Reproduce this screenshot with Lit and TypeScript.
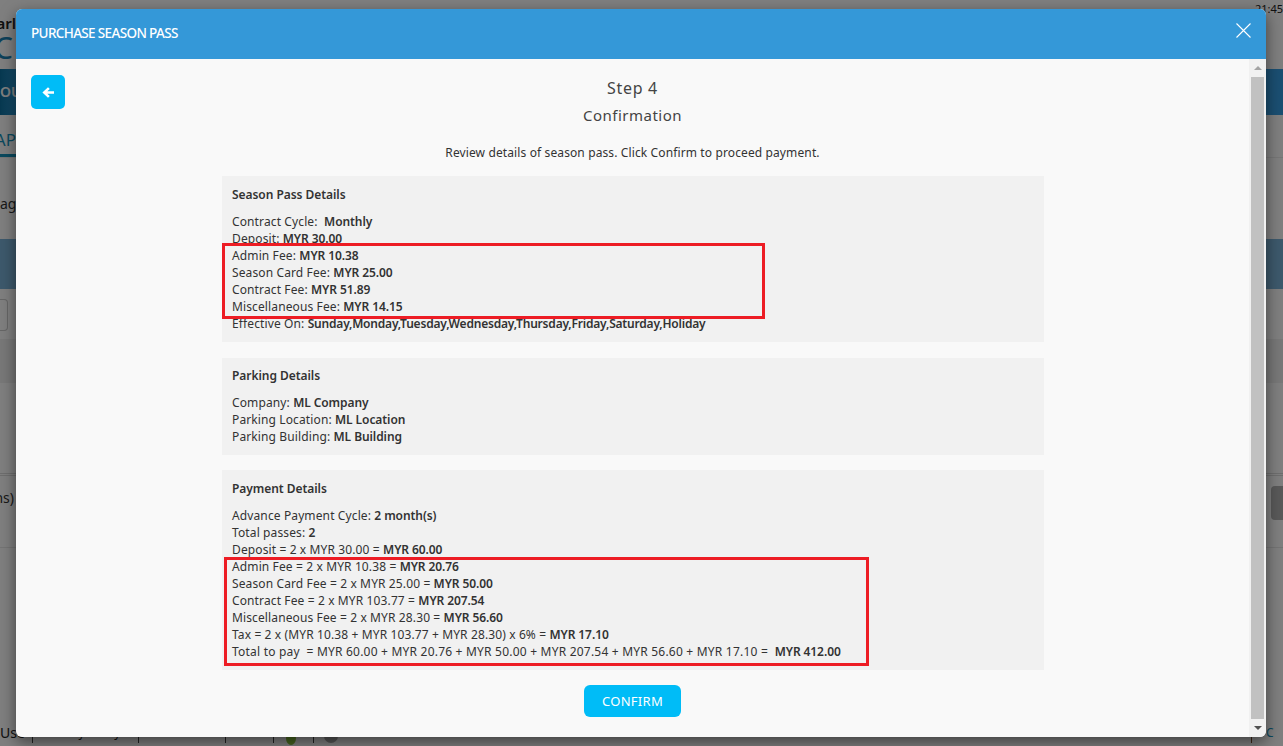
import { LitElement, html, css } from "lit";
import { customElement } from "lit/decorators.js";

@customElement("app-root")
export class AppRoot extends LitElement {
  static styles = css`
    :host { display: block; width: 1283px; height: 746px; overflow: hidden; position: relative; background: #fff; font-family: "Noto Sans", sans-serif; }

    /* page behind the dialog */
    .page { height: 746px; display: flex; flex-direction: column; color: #333; font-size: 14px; }
    .top { height: 69px; flex: none; display: flex; justify-content: space-between; }
    .logo { width: 16px; overflow: hidden; display: flex; flex-direction: column; align-items: flex-end; padding-top: 13px; box-sizing: border-box; }
    .logo .a { font-size: 15px; line-height: 20px; color: #222; font-weight: 600; white-space: nowrap; }
    .logo .c { font-size: 30px; line-height: 30px; color: #1b82b5; white-space: nowrap; margin-right: 3px; }
    .clock { font-size: 11px; color: #222; width: 28px; padding-top: 1px; white-space: nowrap; overflow: hidden; }
    .nav { height: 46px; flex: none; background: linear-gradient(90deg, #0e709f, #2f9fdd 1.5%, #369ee4); color: #fff; font-size: 14px; font-weight: 600; line-height: 46px; display: flex; justify-content: flex-end; width: 100%; }
    .nav span { width: 17px; overflow: hidden; margin-right: auto; white-space: nowrap; }
    .tabs { height: 42px; flex: none; box-sizing: border-box; padding-top: 8px; }
    .tab { width: 16px; height: 34px; box-sizing: border-box; border-bottom: 3px solid #1693bd; color: #1693bd; font-size: 17px; line-height: 34px; white-space: nowrap; overflow: hidden; display: flex; justify-content: flex-end; }
    .crumb { height: 82px; flex: none; box-sizing: border-box; border-top: 1px solid #ececec; line-height: 20px; padding-top: 36px; font-size: 14px; }
    .crumb span { display: block; width: 16px; white-space: nowrap; overflow: hidden; }
    .band { height: 50px; flex: none; background: #7ab2d8; }
    .filter { height: 51px; flex: none; box-sizing: border-box; padding-top: 10px; border-bottom: 1px solid #f0f0f0; }
    .input { width: 8px; height: 32px; box-sizing: border-box; border: 1px solid #ccc; border-left: 0; border-radius: 0 4px 4px 0; }
    .row { height: 43px; flex: none; box-sizing: border-box; }
    .row.alt { background: #f1f1f1; }
    .row.last { height: 50px; border-bottom: 3px double #ddd; }
    .plan { height: 72px; flex: none; box-sizing: border-box; border-bottom: 1px solid #e8e8e8; display: flex; justify-content: space-between; padding-top: 10px; }
    .plan span { width: 14px; font-size: 14px; line-height: 24px; overflow: hidden; white-space: nowrap; display: flex; justify-content: flex-end; }
    .plan i { width: 12px; height: 34px; background: #b2b2b2; border-radius: 4px 0 0 4px; }
    .foot { margin-top: auto; height: 24px; flex: none; display: grid; grid-template-columns: 32px 106px 87px 48px 40px 40px 1fr auto; font-size: 12px; line-height: 16px; color: #222; box-sizing: border-box; padding-top: 3px; }
    .foot > div { border-left: 1px solid #444; height: 18px; text-align: center; padding-right: 6px; box-sizing: border-box; white-space: nowrap; }
    .foot > div:first-child { border: 0; text-align: left; font-size: 14px; overflow: hidden; }
    .foot .free { border: 0; padding: 0; }
    .tail { display: flex; }
    .foot .bro { border: 0; color: #14506f; padding-right: 14px; }
    .foot .end { width: 17px; border-left: 1px solid #7b4b2a; padding: 0 0 0 14px; color: #1693bd; text-align: left; overflow: hidden; }
    .dot { display: inline-block; width: 14px; height: 14px; border-radius: 50%; background: #aaa; vertical-align: top; margin-top: 4px; }
    .dot.g { width: 10px; background: #8cc63f; margin-top: 6px; }

    /* overlay and dialog */
    .backdrop { position: absolute; inset: 0; background: rgba(0,0,0,.5); }
    .modal { position: absolute; left: 16px; top: 9px; width: 1250px; height: 728px; border-radius: 6px; background: #f9f9f9; box-shadow: 0 5px 15px rgba(0,0,0,.5); display: flex; flex-direction: column; overflow: hidden; }
    .head { height: 50px; flex: none; box-sizing: border-box; background: #3498d8; color: #fff; display: flex; align-items: center; justify-content: space-between; padding: 0 15px 2px 15px; font-size: 13.5px; font-weight: 500; letter-spacing: -.65px; }
    .close { display: block; margin-top: -6px; }
    .main { flex: 1; display: flex; min-height: 0; }
    .content { flex: 1; position: relative; color: #333; font-size: 12px; line-height: 17px; letter-spacing: .12px; }
    .back { position: absolute; left: 15px; top: 16px; width: 34px; height: 34px; border-radius: 5px; background: #00bcf7; display: flex; align-items: center; justify-content: center; }
    .step { text-align: center; font-size: 16px; line-height: 27px; padding-top: 16px; color: #444; letter-spacing: .7px; }
    .conf { text-align: center; font-size: 15px; line-height: 27px; color: #444; letter-spacing: .5px; }
    .intro { text-align: center; margin-top: 15px; line-height: 17px; letter-spacing: .12px; }
    .card { margin: 16px 0 0 206px; width: 822px; box-sizing: border-box; background: #f1f1f1; padding: 9px 10px 10px; }
    .card.first { margin-top: 15px; padding: 9.5px 10px 10.5px; }
    .card.third { margin-top: 15px; padding: 9.5px 10px 10.5px; }
    .card h4 { margin: 0 0 9px; font-size: 12px; line-height: 18px; font-weight: 600; letter-spacing: -.05px; }
    .card b { font-weight: 600; letter-spacing: -.08px; }
    .card div { white-space: pre; }
    .card .total { letter-spacing: .21px; }
    .card .tight b { letter-spacing: -.2px; }
    .btn { display: block; margin: 15px auto 0; width: 97px; height: 32px; border: 0; border-radius: 6px; background: #00bcf7; color: #fff; font: 13px "Noto Sans", sans-serif; padding: 0; letter-spacing: .3px; }
    .bar { width: 17px; flex: none; background: #f1f1f1; display: flex; flex-direction: column; align-items: center; }
    .arrow { height: 18px; flex: none; display: flex; align-items: center; justify-content: center; }
    .thumb { flex: 1; width: 13px; background: #c1c1c1; }
    .arrow.up::before { content: ""; border: 4px solid transparent; border-top: 0; border-bottom: 4px solid #a3a3a3; }
    .arrow.down::before { content: ""; border: 4px solid transparent; border-bottom: 0; border-top: 4px solid #505050; }
    .mark { position: absolute; box-sizing: border-box; border: 3px solid #ed1c24; }
    .m1 { left: 206px; top: 184px; width: 543px; height: 76px; }
    .m2 { left: 208px; top: 498px; width: 645px; height: 109px; }
  `;

  private lines(rows: [string, string][]) {
    return rows.map(([a, b]) => html`<div>${a}<b>${b}</b></div>`);
  }

  render() {
    return html`
      <div class="page">
        <div class="top">
          <div class="logo"><span class="a">arl</span><span class="c">C</span></div>
          <div class="clock">21:45:</div>
        </div>
        <div class="nav"><span>OU</span></div>
        <div class="tabs"><div class="tab">AP</div></div>
        <div class="crumb"><span>age</span></div>
        <div class="band"></div>
        <div class="filter"><div class="input"></div></div>
        <div class="row alt"></div>
        <div class="row"></div>
        <div class="row last"></div>
        <div class="plan"><span>ns)</span><i></i></div>
        <div class="foot">
          <div>Use</div>
          <div>Privacy Policy</div>
          <div>Guarantee</div>
          <div>SLA</div>
          <div><span class="dot g"></span></div>
          <div><span class="dot"></span></div>
          <div class="free"></div>
          <div class="free tail">
            <div class="bro">Brochure</div><div class="end">C</div>
          </div>
        </div>
      </div>
      <div class="backdrop"></div>
      <div class="modal">
        <div class="head">
          <span>PURCHASE SEASON PASS</span>
          <svg class="close" width="15" height="15" viewBox="0 0 15 15"><path d="M.5.5l14 14M14.5.5l-14 14" stroke="#fff" stroke-width="1.1" fill="none"/></svg>
        </div>
        <div class="main">
          <div class="content">
            <div class="back">
              <svg width="12" height="11" viewBox="0 0 12 11"><path d="M6 .3.4 5.5 6 10.7l1.8-1.8-2.5-2.2H12V4.3H5.3l2.5-2.2z" fill="#fff"/></svg>
            </div>
            <div class="step">Step 4</div>
            <div class="conf">Confirmation</div>
            <div class="intro">Review details of season pass. Click Confirm to proceed payment.</div>
            <div class="card first">
              <h4>Season Pass Details</h4>
              ${this.lines([
                ["Contract Cycle:  ", "Monthly"],
                ["Deposit: ", "MYR 30.00"],
                ["Admin Fee: ", "MYR 10.38"],
                ["Season Card Fee: ", "MYR 25.00"],
                ["Contract Fee: ", "MYR 51.89"],
                ["Miscellaneous Fee: ", "MYR 14.15"],
              ])}
              <div class="tight">Effective On: <b>Sunday,Monday,Tuesday,Wednesday,Thursday,Friday,Saturday,Holiday</b></div>
            </div>
            <div class="card">
              <h4>Parking Details</h4>
              ${this.lines([
                ["Company: ", "ML Company"],
                ["Parking Location: ", "ML Location"],
                ["Parking Building: ", "ML Building"],
              ])}
            </div>
            <div class="card third">
              <h4>Payment Details</h4>
              ${this.lines([
                ["Advance Payment Cycle: ", "2 month(s)"],
                ["Total passes: ", "2"],
                ["Deposit = 2 x MYR 30.00 = ", "MYR 60.00"],
                ["Admin Fee = 2 x MYR 10.38 = ", "MYR 20.76"],
                ["Season Card Fee = 2 x MYR 25.00 = ", "MYR 50.00"],
                ["Contract Fee = 2 x MYR 103.77 = ", "MYR 207.54"],
                ["Miscellaneous Fee = 2 x MYR 28.30 = ", "MYR 56.60"],
                ["Tax = 2 x (MYR 10.38 + MYR 103.77 + MYR 28.30) x 6% = ", "MYR 17.10"],
              ])}
              <div class="total">Total to pay  = MYR 60.00 + MYR 20.76 + MYR 50.00 + MYR 207.54 + MYR 56.60 + MYR 17.10 =  <b>MYR 412.00</b></div>
            </div>
            <button class="btn">CONFIRM</button>
            <div class="mark m1"></div>
            <div class="mark m2"></div>
          </div>
          <div class="bar">
            <div class="arrow up"></div>
            <div class="thumb"></div>
            <div class="arrow down"></div>
          </div>
        </div>
      </div>`;
  }
}
